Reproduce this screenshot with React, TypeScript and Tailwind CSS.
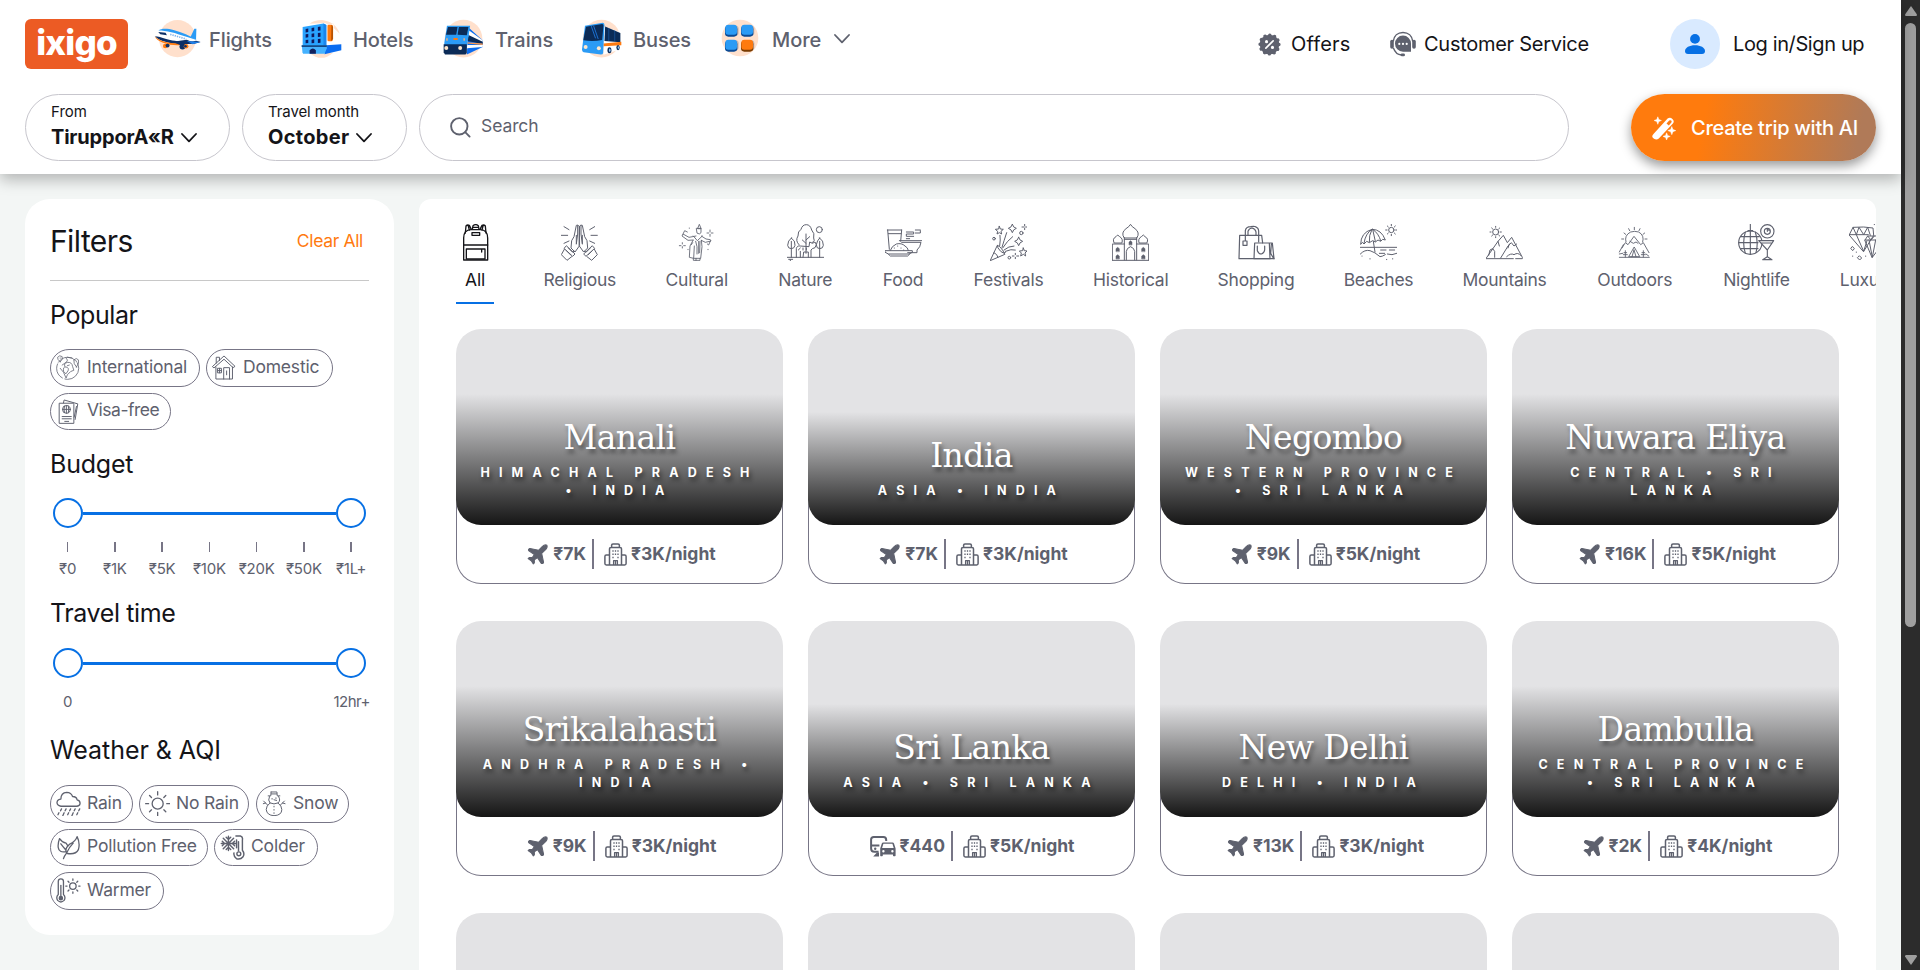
import React from "react";
import { Plane } from "lucide-react";

const INK = "#5e616e";

type IconProps = { children: React.ReactNode; className?: string; box?: string; sw?: number };

function Line({ children, className = "", box = "0 0 111 111", sw = 3 }: IconProps) {
  return (
    <svg viewBox={box} className={className} fill="none" stroke="currentColor" strokeWidth={sw} strokeLinecap="round" strokeLinejoin="round">
      {children}
    </svg>
  );
}

/* ---------- top navigation pictures ---------- */

function FlightArt() {
  return (
    <svg viewBox="460 55 145 120" className="h-10 w-[48px] shrink-0">
      <circle cx="534" cy="117" r="56" fill="#ffe0cc" />
      <path d="M572 115L585 87h6l-1 34z" fill="#2b9bf5" />
      <path d="M466 106C466 92 480 86 496 88C525 92 556 103 590 120L604 127L585 133L552 136C520 138 478 128 467 115Z" fill="#fff" />
      <path d="M466 110C478 124 510 133 545 134L585 132L604 127L590 123C560 130 520 124 500 118C486 114 474 110 466 110Z" fill="#0d2f66" />
      <path d="M465 110C480 127 520 133 545 131L540 137C510 139 472 128 465 110Z" fill="#ff7a0f" />
      <path d="M476 92C486 85 505 86 522 91C548 98 572 108 592 121L556 110C530 100 500 92 476 92Z" fill="#2b9bf5" />
      <path d="M476 97L498 99L502 107L482 104Z" fill="#0d2f66" />
      <path d="M512 104L560 118" stroke="#7fb2ea" strokeWidth="5" strokeDasharray="4 3" fill="none" />
      <path d="M520 126L562 120L578 127L548 139Z" fill="#0d2f66" />
      <path d="M562 124L603 127L580 134Z" fill="#1f7fe8" />
      <circle cx="497" cy="139" r="7" fill="#ff7a0f" />
      <circle cx="504" cy="138" r="6" fill="#0d2f66" />
      <circle cx="549" cy="141" r="9" fill="#0d2f66" />
      <circle cx="560" cy="140" r="7" fill="#ff7a0f" />
      <circle cx="558" cy="140" r="4" fill="#0d2f66" />
    </svg>
  );
}

function HotelArt() {
  return (
    <svg viewBox="904 55 124 120" className="h-10 w-[41px] shrink-0">
      <path d="M964 61A57 57 0 0 1 1021 102L1003 85V72L985 74Z" fill="#ffe0cc" />
      <path d="M930 160Q966 190 1000 160Z" fill="#ffe0cc" />
      <path d="M930 72Q945 60 970 61L985 70Z" fill="#ffe0cc" />
      <rect x="984" y="75" width="16" height="50" rx="4" fill="#ff7a0f" />
      <path d="M996 76q6 2 5 12v30l-6 6z" fill="#b85200" />
      <path d="M909 82L972 71L980 76V160H909Z" fill="#29a3ff" />
      <path d="M972 71L981 76V150L972 158Z" fill="#1a86ee" />
      <path d="M980 137L1026 134V152L975 164Z" fill="#0a6cf0" />
      <path d="M906 137H982V147L975 163H910Z" fill="#45b2ff" />
      <path d="M906 137H982V142H906Z" fill="#10407c" />
      <path d="M930 163V152Q940 142 949 152V163Z" fill="#12205c" />
      <g fill="#10185c">
        <path d="M918 88l8-2v11l-8 1zM936 85l8-2v11l-8 1zM955 82l8-2v12l-8 1zM918 104l8-1v10l-8 1zM936 102l8-1v11l-8 1zM955 100l8-1v12l-8 1zM918 121l8-1v10l-8 1zM936 120l8-1v11l-8 1zM955 118l8-1v12l-8 1z" />
      </g>
    </svg>
  );
}

function TrainArt() {
  return (
    <svg viewBox="40 55 124 120" className="h-10 w-[41px] shrink-0">
      <circle cx="102" cy="117" r="57" fill="#ffe0cc" />
      <path d="M118 84L160 122V142L112 165Z" fill="#0a6cf0" />
      <path d="M119 92L160 122V129L116 112Z" fill="#fff" />
      <path d="M117 106L160 126V133L114 124Z" fill="#0b2b57" />
      <path d="M113 130L160 134" stroke="#ff9a4d" strokeWidth="4" />
      <path d="M112 136L161 136L160 142L112 146Z" fill="#fff" />
      <path d="M52 78H122L110 158H44V130Z" fill="#2b9bf5" />
      <path d="M55 82H84L80 105H49Z" fill="#0b2b57" />
      <path d="M88 82H117L112 107L84 105Z" fill="#0b2b57" />
      <path d="M42 134H112V160L108 165H46L42 158Z" fill="#0b2b57" />
      <rect x="71" y="115" width="14" height="6" rx="2" fill="#ff7a0f" />
      <path d="M50 116h4v7h-4zM102 116h4v7h-4z" fill="#ffb27a" />
      <circle cx="50" cy="145" r="6" fill="#ffe7cc" />
      <circle cx="92" cy="145" r="6" fill="#ffe7cc" />
    </svg>
  );
}

function BusArt() {
  return (
    <svg viewBox="454 55 124 120" className="h-10 w-[41px] shrink-0">
      <circle cx="516" cy="117" r="57" fill="#ffe0cc" />
      <path d="M522 80L576 98V148L522 166Z" fill="#fff" />
      <path d="M527 80L573 100V128L525 124Z" fill="#0b2b57" />
      <path d="M538 85V124M556 92V126" stroke="#1d5ea8" strokeWidth="2" />
      <path d="M522 132L576 126V137L522 140Z" fill="#ff7a0f" />
      <path d="M466 78L520 69Q525 70 525 76L521 160Q520 165 514 165L462 158Q457 156 457 150Z" fill="#2b9bf5" />
      <path d="M469 81L518 73Q522 74 522 78L518 121Q490 127 461 122Z" fill="#0b2b57" />
      <path d="M485 79L498 116M492 78L506 118" stroke="#1b6fd0" strokeWidth="3" />
      <circle cx="468" cy="142" r="6" fill="#ffe7cc" />
      <circle cx="508" cy="146" r="6" fill="#ffe7cc" />
      <ellipse cx="540" cy="152" rx="6" ry="9" fill="#0b2b57" />
      <ellipse cx="566" cy="144" rx="5" ry="8" fill="#0b2b57" />
      <ellipse cx="541" cy="152" rx="2.5" ry="5" fill="#8fc4f7" />
      <ellipse cx="567" cy="144" rx="2" ry="4" fill="#8fc4f7" />
    </svg>
  );
}

function MoreArt() {
  return (
    <svg viewBox="874 55 114 120" className="h-10 w-[38px] shrink-0">
      <circle cx="931" cy="115" r="55" fill="#ffe0cc" />
      <g fill="#c9b7b0">
        <rect x="890" y="78" width="37" height="30" rx="9" />
        <rect x="937" y="78" width="37" height="30" rx="9" />
        <rect x="890" y="122" width="37" height="30" rx="9" />
        <rect x="937" y="122" width="37" height="30" rx="9" />
      </g>
      <g fill="#0b4a94">
        <rect x="886" y="79" width="37" height="32" rx="10" />
        <rect x="934" y="79" width="37" height="32" rx="10" />
        <rect x="886" y="124" width="37" height="32" rx="10" />
      </g>
      <rect x="934" y="124" width="37" height="32" rx="10" fill="#7a3b00" />
      <g fill="#2b9bf5">
        <rect x="887" y="75" width="35" height="30" rx="9" />
        <rect x="935" y="75" width="35" height="30" rx="9" />
        <rect x="887" y="120" width="35" height="30" rx="9" />
      </g>
      <rect x="935" y="120" width="35" height="30" rx="9" fill="#ff7a0f" />
    </svg>
  );
}

function Chevron({ className = "" }: { className?: string }) {
  return (
    <svg viewBox="0 0 16 10" className={className} fill="none" stroke="currentColor" strokeWidth="1.8" strokeLinecap="round" strokeLinejoin="round">
      <path d="M1 1L8 8.4L15 1" />
    </svg>
  );
}

function OffersIcon() {
  return (
    <svg viewBox="0 0 24 24" className="h-[23px] w-[23px] shrink-0">
      <circle cx="12" cy="12" r="10.2" fill={INK} />
      <circle cx="12" cy="12" r="9.9" fill="none" stroke={INK} strokeWidth="3.4" strokeLinecap="round" strokeDasharray="0.1 5.08" />
      <path d="M8.2 15.8L15.8 8.2" stroke="#fff" strokeWidth="1.7" strokeLinecap="round" />
      <circle cx="8.9" cy="9" r="1.6" fill="#fff" />
      <circle cx="15.1" cy="15" r="1.6" fill="#fff" />
    </svg>
  );
}

function HeadsetIcon() {
  return (
    <svg viewBox="0 0 26 26" className="h-[26px] w-[26px] shrink-0">
      <path d="M3.2 10.5C3.8 4.6 8 1.4 13 1.4S22.2 4.6 22.8 10.5" fill="none" stroke={INK} strokeWidth="1.5" />
      <path d="M3.4 17C5 21.5 8 23.8 11.5 24" fill="none" stroke={INK} strokeWidth="1.4" />
      <rect x="10.6" y="22.5" width="4.4" height="2.8" rx="1.4" fill={INK} />
      <rect x="0.2" y="8.8" width="3.6" height="9" rx="1.8" fill={INK} />
      <rect x="22.2" y="8.8" width="3.6" height="9" rx="1.8" fill={INK} />
      <path d="M13 4.6a8 8 0 0 1 8 8v8.2h-8a8.1 8.1 0 0 1-8-8.2a8 8 0 0 1 8-8z" fill={INK} />
      <circle cx="9.3" cy="12.9" r="1.1" fill="#fff" />
      <circle cx="13" cy="12.9" r="1.1" fill="#fff" />
      <circle cx="16.7" cy="12.9" r="1.1" fill="#fff" />
    </svg>
  );
}

function WandIcon() {
  return (
    <svg viewBox="0 0 25 24" className="h-6 w-[25px] shrink-0">
      <path d="M2.5 18L16.6 2.6Q19 0.6 21.4 2.9T21.9 7.6L7.8 22.6Q5.6 24.4 3 22.8L1.6 21.4Q0.6 20 2.5 18Z" fill="#fff" />
      <path d="M15.5 7.4L18.2 4.6Q19.3 3.7 20.2 4.6T20.4 6.6L17.8 9.5Z" fill="#fb7b13" />
      <path d="M6.8 0.8l1 2.7 2.6 1-2.6 1-1 2.8-1-2.8-2.7-1 2.7-1z" fill="#fff" stroke="#fff" strokeWidth=".5" />
      <path d="M20.8 10.6l1.1 2.9 2.9 1.1-2.9 1.1-1.1 3-1.1-3-2.9-1.1 2.9-1.1z" fill="#fff" stroke="#fff" strokeWidth=".5" />
      <path d="M15.6 16.8l1 2.6 2.6 1-2.6 1-1 2.6-1-2.6-2.6-1 2.6-1z" fill="#fff" stroke="#fff" strokeWidth=".5" />
    </svg>
  );
}

/* ---------- category pictures ---------- */

const catIcons: Record<string, React.ReactNode> = {
  All: (
    <g strokeWidth="4">
      <path d="M20 108V42Q20 18 42 17H70Q92 18 92 42V108Z" />
      <path d="M20 63H92M28 75H84V105H28ZM74 76V84" />
      <path d="M45 26H68V34H45Z" />
      <path d="M25 27L27 6Q31 1 37 4L43 16M87 27L85 6Q81 1 75 4L69 16M34 6L37 18M78 6L75 18" />
      <path d="M46 16L48 5Q56 -1 64 5L66 16M50 10H62" />
    </g>
  ),
  Religious: (
    <>
      <path d="M55 8Q51 0 46 4L39 38L32 50L30 72L42 84L55 66ZM55 8Q59 0 64 4L71 38L78 50L80 72L68 84L55 66Z" />
      <path d="M50 5V30L46 60M60 5V30L64 60M46 34V58M64 34V58" />
      <path d="M17 66L42 90L35 97L10 74ZM93 66L68 90L75 97L100 74ZM10 76L1 92L18 109L32 98M100 76L109 92L92 109L78 98" />
      <path d="M22 72L34 84L40 82M88 72L76 84L70 82M16 80L28 92M94 80L82 92" />
      <path d="M9 8L24 17M1 34H20M9 58L24 51M101 8L86 17M109 34H90M101 58L86 51" />
    </>
  ),
  Cultural: (
    <g strokeWidth="2.6">
      <path d="M59 13L64 1L69 13ZM56 13H69V26Q65 33 58 28Z" />
      <path d="M54 36L33 40L15 30L12 36L30 49L46 48M15 30L20 20L28 24M70 36L84 45L97 47L99 51L82 55L70 49M97 51L92 63L88 60M46 36L58 50L73 36" />
      <path d="M45 49L36 66L34 100L47 103L49 66M70 49L72 68L68 103L49 103M53 52L57 68V90M62 52V88M66 52L65 86M40 62L44 56" />
      <path d="M46 103V109H66V103M54 103V109" />
      <path d="M96 18V24M96 31V37M87 27H92M100 27H105M13 56V60M13 68V72M4 65H9M17 65H22M34 12V13M30 76V77M90 76V77" />
    </g>
  ),
  Nature: (
    <>
      <path d="M36 62Q24 50 33 36Q32 22 42 16Q46 2 58 2Q70 2 74 18Q84 28 80 42Q86 50 76 56M57 30V88M57 48L68 38M57 58L46 48" />
      <circle cx="97" cy="17" r="9" />
      <path d="M13 42Q26 50 24 64Q22 74 13 74Q3 74 2 64Q2 50 13 42ZM13 52V100M98 42Q110 50 109 64Q108 74 98 74Q88 74 88 62Q90 50 98 42ZM98 52V100" />
      <path d="M28 100V74Q30 64 40 66L66 68L68 54L76 58L84 54L88 62Q86 74 76 74L72 78V100M40 100V82M48 100L50 84H64V100M34 78L40 72M48 72V78M58 72V78" />
      <path d="M0 100H111M5 106H17M10 108V110" />
    </>
  ),
  Food: (
    <>
      <path d="M7 18H50M8 18L13 76M50 18L47 52M10 29H48M43 50H111M50 55H108Q106 70 96 78V86H68" />
      <path d="M1 80H82V85L72 90H10L1 85ZM16 79Q20 66 34 60Q50 56 60 66Q68 70 70 79M28 72V72.5M38 66V66.5M48 72V72.5M56 78V78.5M10 90L16 96H68L74 90" />
      <path d="M64 24H86V30H64V37H86M64 44H74M91 18H106M91 27H106V20" />
    </>
  ),
  Festivals: (
    <>
      <path d="M1 109L22 64Q34 68 44 90ZM12 86Q22 90 24 100M22 64Q20 70 32 82Q40 90 46 86" />
      <path d="M29 66Q32 46 30 34M36 70Q42 50 50 26M38 72Q52 50 68 38M42 78Q56 66 72 66M46 82Q64 74 76 78" />
      <path d="M28 7L31 15L40 16L33 22L35 30L28 26L21 30L23 22L16 16L25 15ZM100 72L103 80L111 81L105 87L107 96L100 91L92 96L94 87L88 81L97 80Z" />
      <path d="M67 1Q69 11 79 13Q69 16 67 26Q65 16 55 13Q65 11 67 1ZM86 40Q88 50 98 52Q88 55 86 65Q84 55 74 52Q84 50 86 40Z" />
      <path d="M104 0V6M104 12V17M96 9H101M107 9H112M76 88V92M76 100V104M67 96H72M80 96H86" />
      <circle cx="12" cy="44" r="4" />
      <circle cx="94" cy="27" r="5" />
      <circle cx="58" cy="101" r="4" />
    </>
  ),
  Historical: (
    <>
      <path d="M36 41Q26 26 42 14Q52 8 55.5 1Q59 8 69 14Q85 26 75 41ZM37 41V108M74 41V108M37 46H74" />
      <path d="M1 108V60H37M110 108V60H74M6 56Q0 44 12 38L17 33L23 38Q34 44 30 56ZM81 56Q77 44 88 38L94 33L99 38Q111 44 105 56ZM0 109H111" />
      <path d="M43 108V82Q44 72 55.5 68Q67 72 68 82V108" />
      <g fill="currentColor" strokeWidth="1.5">
        <path d="M12 82V74L17 70L22 74V82ZM12 104V96L17 92L22 96V104ZM89 82V74L94 70L99 74V82ZM89 104V96L94 92L99 96V104ZM51 62V54L55.5 50L60 54V62Z" />
      </g>
    </>
  ),
  Shopping: (
    <g strokeWidth="3.6">
      <path d="M5 34H71L74 57M5 34L3 104H108" />
      <path d="M22 50V20Q24 8 38 8Q50 6 52 8Q62 12 62 22V54M30 34V22Q34 12 42 12Q52 14 54 24V34M15 51H27V64H15Z" />
      <path d="M50 57H94L96 104H48ZM94 57H103L108 104M100 60L98 88L106 102M58 66V80Q62 90 70 90Q78 88 80 78V66" />
    </g>
  ),
  Beaches: (
    <>
      <path d="M2 60Q2 26 36 16Q64 16 76 48L68 46L62 52L54 48L46 54L38 50L28 56L20 52L12 60L8 56ZM36 16Q16 28 12 58M36 16Q26 34 28 54M38 16Q42 34 46 52M38 16Q56 28 62 50M40 52L45 84" />
      <circle cx="94" cy="18" r="8" />
      <path d="M94 1V5M94 31V35M77 18H81M107 18H111M82 6L85 9M106 6L103 9M82 30L85 27M106 30L103 27" />
      <path d="M1 70H111M1 90Q14 76 30 80Q44 84 60 98Q66 98 76 92M58 88H74M82 90L96 92L110 88M62 78H78M88 78H104M6 96V96.5M30 104V105M80 106V107M98 104V105" />
    </>
  ),
  Mountains: (
    <>
      <path d="M1 104H82M89 104H109V100L77 40L64 56L52 34L36 52L1 102M36 52L40 66M44 102L66 66L76 56L84 66L92 60M8 94L12 78L20 74L26 82V100M70 60L66 72M62 98Q74 86 84 92Q96 84 104 94" />
      <circle cx="29" cy="24" r="9" />
      <path d="M29 7V10M29 38V41M12 24H15M43 24H46M17 12L20 15M41 12L38 15M17 36L20 33M41 36L38 33" />
    </>
  ),
  Outdoors: (
    <g strokeWidth="2.7">
      <path d="M18 72L28 56L36 62L54 37L74 62L82 56L99 86M42 52L52 58L60 54L66 58M10 84L22 62M10 100H100M10 90L20 88" />
      <path d="M30 54Q24 34 44 24Q56 20 68 24Q86 34 80 54M55 10V17M38 14L41 20M72 14L69 20M24 27L29 31M86 27L81 31M17 45H23M93 45H87" />
      <path d="M54 70L38 98H70ZM54 78L48 98M54 78L60 98M28 80V99M22 92H34M24 86H32M82 80V99M76 92H88M78 86H86M90 90L98 96" />
    </g>
  ),
  Nightlife: (
    <g strokeWidth="3.4">
      <circle cx="37" cy="56" r="35" />
      <path d="M37 1V20M30 20H44M37 21V91M2 56H60M8 38H64M8 74H60M22 24Q12 56 22 88M52 24Q62 56 54 86" />
      <circle cx="88" cy="22" r="20" fill="#fff" />
      <circle cx="88" cy="22" r="9" />
      <path d="M88 22V15L94 20" />
      <path d="M62 50H107L88 78V98L74 107H102L88 98V78ZM70 57H100" fill="#fff" />
    </g>
  ),
  Luxury: (
    <>
      <path d="M1 32L12 10L44 9L72 12L74 34L44 82ZM1 32H58M12 10L22 32L30 10L44 32L56 10L64 34M22 32L44 82L54 50" />
      <path d="M48 48L56 36H90L108 50L70 100ZM48 48H106M60 48L70 100L80 48M56 36L66 48L76 36" />
      <path d="M11 68L16 74L11 80L6 74ZM32 96L38 102L32 108L26 102ZM11 96V97M22 84V85M50 96V97M76 0V2M84 12V14" />
    </>
  ),
};

/* ---------- filter chip pictures, 75-unit grid ---------- */

const chipIcons: Record<string, React.ReactNode> = {
  International: (
    <g strokeWidth="2.4">
      <circle cx="35" cy="40" r="34" strokeDasharray="62 8 50 6 60 8" />
      <path d="M12 20Q2 12 4 6Q10 -2 18 4Q22 12 12 20ZM62 36Q52 26 54 14Q62 6 68 14Q72 24 62 36ZM30 8Q38 16 32 20L18 30M34 6L48 8" />
      <path d="M26 34Q22 24 34 22Q48 20 50 34L54 46L44 50L34 60L30 70L22 52L12 40M22 48Q20 34 30 36Q40 38 36 48L30 56ZM40 30L34 32M62 18V19M12 8V9" />
    </g>
  ),
  Domestic: (
    <g strokeWidth="3">
      <path d="M1 34L36 2L70 34L64 38L36 12L6 38ZM11 36V73H62V36M12 24V6H22V16M35 73V38H53V73M44 48V60" />
      <path d="M17 40H28V54H17ZM17 47H28M22 40V54" />
    </g>
  ),
  "Visa-free": (
    <g strokeWidth="3">
      <path d="M10 12H52Q54 12 54 15V74H10ZM22 11L24 2L66 14L58 62M62 22L55 55" />
      <circle cx="31" cy="31" r="12" />
      <path d="M19 31H43M31 19V43M25 21Q22 31 25 41M37 21Q40 31 37 41M18 53H46M18 60H46M26 68H38" />
    </g>
  ),
  Rain: (
    <g strokeWidth="4">
      <path d="M14 46Q2 44 2 34Q4 24 14 24Q14 4 32 3Q46 3 50 16Q62 16 64 26Q74 28 73 38Q72 46 62 46Z" />
      <path d="M16 54L13 60M30 54L27 60M44 54L41 60M58 54L55 60M72 54L69 60M8 66L5 72M24 66L20 75M38 66L35 72M52 66L48 75M66 66L63 72" />
    </g>
  ),
  "No Rain": (
    <g strokeWidth="4">
      <circle cx="38" cy="38" r="17" />
      <path d="M38 1V11M38 65V75M1 38H10M66 38H75M13 13L19 19M57 57L63 63M13 63L19 57M57 19L63 13" />
    </g>
  ),
  Snow: (
    <g strokeWidth="3">
      <path d="M27 2H45L46 14H54M18 14H26L27 2M28 8H44" />
      <path d="M22 16Q16 28 24 36Q12 44 12 56Q14 74 36 75Q60 74 60 56Q60 44 48 36Q58 28 50 16M24 36Q36 42 48 36M36 26L44 28" />
      <path d="M30 22V24M42 20V22M36 46V48M36 56V58M36 66V68M16 42L4 30M10 36L3 38M56 42L68 30M62 36L70 38" />
    </g>
  ),
  "Pollution Free": (
    <g strokeWidth="4">
      <path d="M22 72Q24 64 32 54Q24 42 40 28Q60 18 64 4Q74 24 68 44Q60 60 34 56M52 24Q40 36 32 54M30 50Q8 54 6 38Q4 26 10 10Q18 22 30 24L34 30M14 26Q20 34 30 46" />
    </g>
  ),
  Colder: (
    <g strokeWidth="4.4">
      <path d="M25 3V47M3 25H47M9 9L41 41M41 9L9 41M18 6L25 13L32 6M18 44L25 37L32 44M6 18L13 25L6 32M44 18L37 25L44 32" />
      <path d="M48 2H62Q70 4 68 14V46Q76 56 70 66Q62 76 50 72Q40 64 42 54" />
      <path d="M56 20V48M50 14V38" />
      <circle cx="57" cy="57" r="6" />
    </g>
  ),
  Warmer: (
    <g strokeWidth="4">
      <path d="M6 50V10Q6 2 14 2Q22 2 22 10V50Q30 58 24 68Q14 78 4 68Q-2 58 6 50Z" />
      <path d="M14 22V58" />
      <circle cx="14" cy="61" r="5" fill="currentColor" />
      <circle cx="51" cy="24" r="10" />
      <path d="M51 2V6M51 42V46M29 24H33M69 24H73M36 9L39 12M63 36L66 39M36 39L39 36M63 12L66 9" />
    </g>
  ),
};

/* ---------- card pictures ---------- */

function BuildingIcon() {
  return (
    <svg viewBox="0 0 23 23" className="h-[23px] w-[23px] shrink-0" fill="none" stroke={INK} strokeWidth="1.5" strokeLinejoin="round">
      <path d="M5.5 22V5.8Q5.5 4.4 7 4.4H16Q17.5 4.4 17.5 5.8V22M7.6 4.2V2.2Q7.6 1 9 1H14Q15.4 1 15.4 2.2V4.2M5.5 12H2.3Q.9 12 .9 13.4V20.6Q.9 22 2.3 22H20.7Q22.1 22 22.1 20.6V13.4Q22.1 12 20.7 12H17.5" />
      <path d="M9 7.2V8.8M11.5 7.2V8.8M14 7.2V8.8M9 10.5V12.1M11.5 10.5V12.1M14 10.5V12.1M9 13.8V15.2M14 13.8V15.2" strokeWidth="1.3" />
      <path d="M9.6 22V17.6H13.4V22M11.5 18V22" strokeWidth="1.3" />
    </svg>
  );
}

function CommuteIcon() {
  return (
    <svg viewBox="0 0 26 21" className="h-[21px] w-[26px] shrink-0">
      <path d="M8.6 15.8H4.4Q1.1 15.8 1.1 12.6V3.6Q1.1 1.1 3.8 1.1H13.4Q16.2 1.1 16.2 4V5M1.1 9.6H9.4" fill="none" stroke={INK} strokeWidth="2" />
      <path d="M3.2 20.4L7 16.6H9V20.4Z" fill={INK} />
      <circle cx="5.2" cy="12.8" r="1.2" fill={INK} />
      <path fillRule="evenodd" d="M13.2 6.4H22.6Q23.6 6.4 24 7.5L25.6 12.4V19.6Q25.6 20.3 24.9 20.3H23.6Q23 20.3 23 19.6V18.6H12.8V19.6Q12.8 20.3 12.1 20.3H10.8Q10.2 20.3 10.2 19.6V12.4L11.8 7.5Q12.2 6.4 13.2 6.4ZM13.4 7.8L12.1 11.9H23.7L22.4 7.8ZM13.4 14A1.2 1.2 0 1 0 13.4 16.4A1.2 1.2 0 1 0 13.4 14ZM22.4 14A1.2 1.2 0 1 0 22.4 16.4A1.2 1.2 0 1 0 22.4 14Z" fill={INK} />
    </svg>
  );
}

/* ---------- data ---------- */

const categories: [string, string][] = [
  ["All", "w-[38px]"],
  ["Religious", "w-[71.5px]"],
  ["Cultural", "w-[62.5px]"],
  ["Nature", "w-[54.5px]"],
  ["Food", "w-[41px]"],
  ["Festivals", "w-[70px]"],
  ["Historical", "w-[74.5px]"],
  ["Shopping", "w-[76px]"],
  ["Beaches", "w-[69px]"],
  ["Mountains", "w-[83px]"],
  ["Outdoors", "w-[77.5px] tracking-[-0.05px]"],
  ["Nightlife", "w-[66px]"],
  ["Luxury", "w-[56px]"],
];

type Place = { name: string; sub: string[]; fare: string; stay: string; road?: boolean };

const places: Place[] = [
  { name: "Manali", sub: ["Himachal Pradesh", "• India"], fare: "₹7K", stay: "₹3K/night" },
  { name: "India", sub: ["Asia • India"], fare: "₹7K", stay: "₹3K/night" },
  { name: "Negombo", sub: ["Western Province", "• Sri Lanka"], fare: "₹9K", stay: "₹5K/night" },
  { name: "Nuwara Eliya", sub: ["Central • Sri", "Lanka"], fare: "₹16K", stay: "₹5K/night" },
  { name: "Srikalahasti", sub: ["Andhra Pradesh •", "India"], fare: "₹9K", stay: "₹3K/night" },
  { name: "Sri Lanka", sub: ["Asia • Sri Lanka"], fare: "₹440", stay: "₹5K/night", road: true },
  { name: "New Delhi", sub: ["Delhi • India"], fare: "₹13K", stay: "₹3K/night" },
  { name: "Dambulla", sub: ["Central Province", "• Sri Lanka"], fare: "₹2K", stay: "₹4K/night" },
];

/* ---------- pieces ---------- */

function NavLink({ art, label, className }: { art: React.ReactNode; label: string; className: string }) {
  return (
    <a className={`flex h-10 items-center ${className}`}>
      {art}
      <span className="pt-[4px] text-[20px] leading-6 font-medium tracking-[-0.1px] text-[#5e616e]">{label}</span>
    </a>
  );
}

function Chip({ label, className }: { label: string; className: string }) {
  return (
    <div className={`flex h-[37.5px] shrink-0 items-center rounded-full border border-[#777586] pl-[5px] tracking-[-0.2px] text-[#5e616e] ${className}`}>
      <Line box="-1 -1 77 77" className="h-[25px] w-[25px] shrink-0">{chipIcons[label]}</Line>
      <span className="pb-[2px] pl-[6px] text-[17.5px] leading-6 whitespace-nowrap">{label}</span>
    </div>
  );
}

function Slider() {
  return (
    <div className="ml-[3px] flex h-[30px] w-[313px] items-center">
      <div className="h-[30px] w-[30px] rounded-full border-2 border-[#0770e4] bg-white" />
      <div className="h-[3px] flex-1 bg-[#0770e4]" />
      <div className="h-[30px] w-[30px] rounded-full border-2 border-[#0770e4] bg-white" />
    </div>
  );
}

function Card({ place }: { place: Place }) {
  return (
    <article className="h-[255px]">
      <div className="relative z-[1] flex h-[196px] flex-col justify-end overflow-hidden rounded-[25px] bg-[#e3e3e5]">
        <div className="bg-linear-to-b from-transparent to-[#151515] pt-[24px] pb-[25px] text-center text-white [text-shadow:2px_4px_4px_rgba(0,0,0,0.45)]">
          <h3 className="font-['DejaVu_Serif',serif] text-[33px] leading-10 tracking-[-0.6px]">{place.name}</h3>
          <p className="mt-[6px] text-[12.5px] leading-[18px] font-bold tracking-[9.2px] uppercase">
            {place.sub.map((s) => (
              <span key={s} className="block whitespace-nowrap">{s}</span>
            ))}
          </p>
        </div>
      </div>
      <div className="-mt-[40px] flex h-[99px] items-end justify-center rounded-b-[25px] border border-t-0 border-[#777586] pl-[2px] text-[17.5px] font-bold text-[#5e616e]">
        <div className="flex h-[58px] items-center">
          {place.road ? <CommuteIcon /> : <Plane className="h-[25px] w-[25px]" fill={INK} strokeWidth={1} color={INK} />}
          <span className="ml-[3px] leading-6">{place.fare}</span>
          <span className="mr-[10px] ml-[6px] h-[30px] w-[2px] bg-[#777586]" />
          <BuildingIcon />
          <span className="ml-[4px] leading-6">{place.stay}</span>
        </div>
      </div>
    </article>
  );
}

function Header() {
  return (
    <header className="relative z-10 h-[174px] shrink-0 bg-white shadow-[0_6px_14px_rgba(0,0,0,0.26)]">
      <div className="flex h-[94px] items-start pt-[19px] pl-[25px]">
        <div className="flex h-[50px] w-[103px] items-center justify-center rounded-[6px] bg-[#ec5b24] pb-[3px] text-[35px] leading-none font-extrabold tracking-[-0.8px] text-white">ixigo</div>
        <nav className="-mt-px ml-[25px] flex">
          <NavLink art={<FlightArt />} label="Flights" className="w-[148px] gap-[8px]" />
          <NavLink art={<HotelArt />} label="Hotels" className="w-[142px] gap-[11px]" />
          <NavLink art={<TrainArt />} label="Trains" className="w-[138px] gap-[11px]" />
          <NavLink art={<BusArt />} label="Buses" className="w-[140px] gap-[11px]" />
          <NavLink art={<MoreArt />} label="More" className="w-[113px] gap-[13px]" />
          <Chevron className="mt-[16px] h-[10px] w-[16px] text-[#5e616e]" />
        </nav>
        <div className="ml-[408px] flex h-[50px] items-center text-[20px] text-[#141418]">
          <OffersIcon />
          <span className="w-[109px] pl-[10px] tracking-[0.15px]">Offers</span>
          <HeadsetIcon />
          <span className="w-[254px] pl-[8px] tracking-[-0.27px] whitespace-nowrap">Customer Service</span>
          <div className="flex h-[50px] w-[50px] items-center justify-center rounded-full bg-[#d9eaff]">
            <svg viewBox="0 0 20 20" className="h-5 w-5" fill="#0770e4">
              <circle cx="10" cy="4.9" r="4.9" />
              <path d="M10 11.2C15.5 11.2 20 13.4 20 17Q20 20 17 20H3Q0 20 0 17C0 13.4 4.5 11.2 10 11.2Z" />
            </svg>
          </div>
          <span className="pl-[13px] tracking-[-0.38px] whitespace-nowrap">Log in/Sign up</span>
        </div>
      </div>
      <div className="flex pl-[25px]">
        <div className="h-[67px] w-[205px] rounded-full border border-[#c7c6cd] pt-[6px] pl-[25px] text-[#141418]">
          <div className="text-[15px] leading-[22px]">From</div>
          <div className="flex items-center gap-[7px] text-[20px] leading-[29px] font-bold tracking-[-0.2px]">
            TirupporA«R
            <Chevron className="h-[10px] w-[16px]" />
          </div>
        </div>
        <div className="ml-[12px] h-[67px] w-[165px] rounded-full border border-[#c7c6cd] pt-[6px] pl-[25px] text-[#141418]">
          <div className="text-[15px] leading-[22px] tracking-[-0.1px]">Travel month</div>
          <div className="flex items-center gap-[7px] text-[20px] leading-[29px] font-bold tracking-[0.3px]">
            October
            <Chevron className="h-[10px] w-[16px]" />
          </div>
        </div>
        <div className="ml-[12px] flex h-[67px] w-[1150px] items-center rounded-full border border-[#c7c6cd] pl-[30px] text-[17.5px] text-[#5e616e]">
          <svg viewBox="0 0 21 21" className="h-[21px] w-[21px]" fill="none" stroke={INK} strokeWidth="1.9" strokeLinecap="round">
            <circle cx="9.3" cy="9.3" r="8.2" />
            <path d="M15.2 15.2L19.6 19.6" />
          </svg>
          <span className="pb-[3px] pl-[10px] tracking-[-0.1px]">Search</span>
        </div>
        <button className="ml-[62px] flex h-[67px] w-[245px] items-center rounded-full bg-[linear-gradient(100deg,#ff7b0d_30%,#b07a58_92%)] pl-[20px] text-[20px] font-medium whitespace-nowrap text-white shadow-[0_5px_12px_rgba(0,0,0,0.4)]">
          <WandIcon />
          <span className="pl-[15px] tracking-[-0.27px]">Create trip with AI</span>
        </button>
      </div>
    </header>
  );
}

function Filters() {
  const ticks = ["₹0", "₹1K", "₹5K", "₹10K", "₹20K", "₹50K", "₹1L+"];
  return (
    <aside className="h-[736px] w-[369px] shrink-0 rounded-[25px] bg-white px-[25px] text-[#141418]">
      <div className="flex h-[82px] items-center justify-between border-b border-[#c8c8c8] pt-[4px] pr-[6px]">
        <h2 className="text-[30px] tracking-[-0.6px]">Filters</h2>
        <span className="pb-px text-[17.5px] tracking-[-0.35px] text-[#ff7a0f]">Clear All</span>
      </div>
      <h3 className="flex h-[68px] items-center pt-px text-[25px] tracking-[-0.4px]">Popular</h3>
      <div className="flex h-[81px] flex-wrap content-start gap-[6px]">
        <Chip label="International" className="w-[150px]" />
        <Chip label="Domestic" className="w-[127px]" />
        <Chip label="Visa-free" className="w-[121px] tracking-[-0.5px]" />
      </div>
      <h3 className="flex h-[68px] items-center pt-px text-[25px] tracking-[-0.2px]">Budget</h3>
      <Slider />
      <div className="-mx-[6px] flex h-[50.5px] pt-[14px] text-[15px] text-[#5e616e]">
        {ticks.map((t) => (
          <div key={t} className="flex w-[47.25px] shrink-0 flex-col items-center">
            <span className="h-[10px] w-[1.5px] bg-[#777586]" />
            <span className="mt-[7px] leading-5 tracking-[-0.25px]">{t}</span>
          </div>
        ))}
      </div>
      <h3 className="flex h-[69.5px] items-center pt-px text-[25px] tracking-[-0.4px]">Travel time</h3>
      <Slider />
      <div className="-mr-px flex h-[32.5px] justify-between pt-[13.5px] pl-[13px] text-[15px] leading-5 text-[#5e616e]">
        <span>0</span>
        <span className="tracking-[-0.5px]">12hr+</span>
      </div>
      <h3 className="flex h-[74.5px] items-center pt-[6px] text-[25px] tracking-[-0.05px]">Weather &amp; AQI</h3>
      <div className="flex flex-wrap content-start gap-[6px]">
        <Chip label="Rain" className="w-[83px]" />
        <Chip label="No Rain" className="w-[110px]" />
        <Chip label="Snow" className="ml-px w-[93px]" />
        <Chip label="Pollution Free" className="w-[158px]" />
        <Chip label="Colder" className="w-[104px]" />
        <Chip label="Warmer" className="w-[114px]" />
      </div>
    </aside>
  );
}

function ScrollBar() {
  return (
    <div className="flex w-[19px] shrink-0 flex-col items-center bg-[#2c2c2c] pt-[6px] pb-[5px]">
      <svg viewBox="0 0 12 10" className="h-[10px] w-3" fill="#9f9f9f"><path d="M6 0L12 8.5Q12 10 11 10H1Q0 10 0 8.5Z" /></svg>
      <div className="mt-[7px] h-[604px] w-[11px] rounded-full bg-[#9f9f9f]" />
      <svg viewBox="0 0 12 10" className="mt-auto h-[10px] w-3" fill="#9f9f9f"><path d="M6 10L12 1.5Q12 0 11 0H1Q0 0 0 1.5Z" /></svg>
    </div>
  );
}

export default function App() {
  return (
    <div className="flex h-[970px] w-[1920px] overflow-hidden bg-[#f3f6f5] font-['Inter','Noto_Sans',sans-serif]">
      <div className="flex w-[1901px] shrink-0 flex-col">
        <Header />
        <div className="flex h-[796px] gap-[25px] overflow-hidden pt-[25px] pl-[25px]">
          <Filters />
          <main className="h-[800px] w-[1457px] shrink-0 overflow-hidden rounded-t-[12px] bg-white pl-[37px]">
            <div className="flex h-[130px] gap-[50px] pt-[25px]">
              {categories.map(([label, w]) => (
                <div key={label} className={`flex h-[80px] shrink-0 flex-col items-center tracking-[-0.25px] ${w} ${label === "All" ? "border-b-2 border-[#0770e4] text-[#141418]" : "text-[#5e616e]"}`}>
                  <Line className="h-[37px] w-[37px] shrink-0">{catIcons[label]}</Line>
                  <span className="mt-[6.5px] text-[17.5px] leading-6 whitespace-nowrap">{label}</span>
                </div>
              ))}
            </div>
            <div className="grid grid-cols-[repeat(4,327px)] gap-x-[25px] gap-y-[37px]">
              {places.map((p) => (
                <Card key={p.name} place={p} />
              ))}
              {[0, 1, 2, 3].map((i) => (
                <div key={i} className="h-[196px] rounded-[25px] bg-[#e3e3e5]" />
              ))}
            </div>
          </main>
        </div>
      </div>
      <ScrollBar />
    </div>
  );
}
